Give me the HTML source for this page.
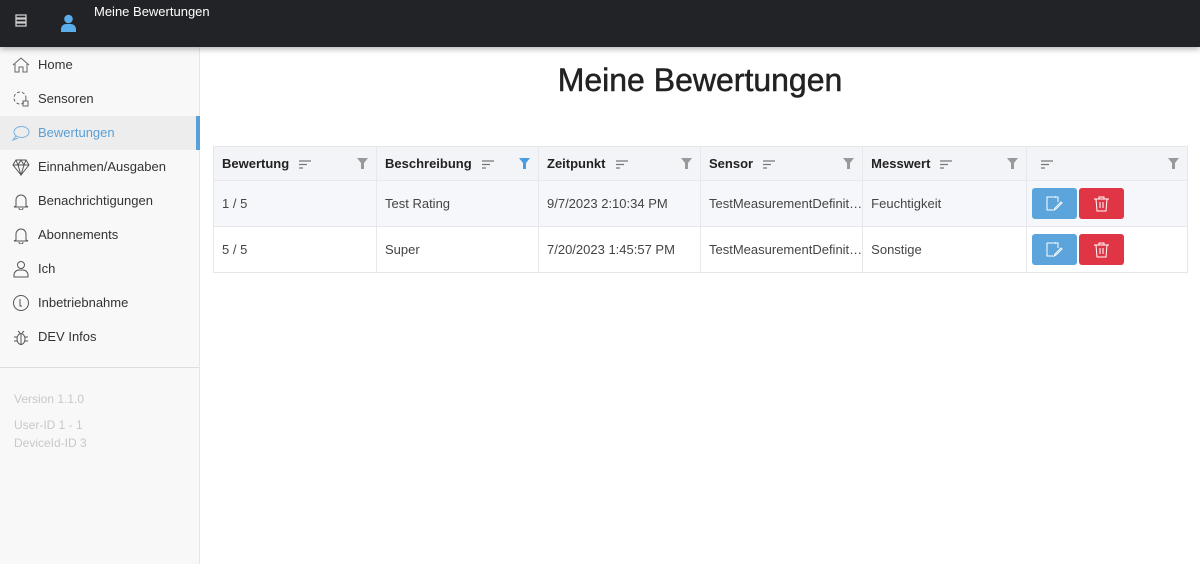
<!DOCTYPE html>
<html><head><meta charset="utf-8"><style>
*{box-sizing:border-box;margin:0;padding:0}
body{width:1200px;height:564px;overflow:hidden;font-family:"Liberation Sans",Arial,sans-serif;background:#fff;position:relative;font-size:13px;color:#333}
.top{position:absolute;left:0;top:0;width:1200px;height:47px;background:#222326;box-shadow:0 2px 6px rgba(0,0,0,.3);z-index:2}
.top .t{position:absolute;left:94px;top:4px;color:#fff;font-size:13px}
.side{position:absolute;left:0;top:47px;width:200px;height:517px;background:#f8f8f9;border-right:1px solid #e6e6e6}
.it{position:absolute;left:0;width:199px;height:34px;line-height:34px;padding-left:38px;color:#333;font-size:13px}
.it svg{position:absolute;left:12px;top:8px}
.act{background:#ededed;color:#5a9fd6;border-right:4px solid #5a9fd6;width:200px}
.ver{position:absolute;left:14px;color:#c8c8c8;font-size:12px}
h1{position:absolute;left:200px;width:1000px;top:62px;text-align:center;font-weight:normal;font-size:32px;color:#222;font-family:"Liberation Sans",sans-serif;-webkit-text-stroke:0.5px #222}
table{position:absolute;left:213px;top:146px;width:975px;border-collapse:collapse;border:1px solid #e4e6eb}
td,th{border-right:1px solid #e8e8ec;text-align:left;padding-left:8px;font-size:13px;color:#444}
th{height:34px;background:#f3f4f8;font-weight:bold;color:#222;position:relative}
tr.r td{height:46px;border-top:1px solid #e8e8ec}
tr.a td{background:#f6f7fa}
.s{display:inline-block;vertical-align:middle;margin-left:10px}
.f{position:absolute;right:8px;top:11px}
.b{display:inline-block;width:45px;height:31px;border-radius:3px;vertical-align:middle;margin-right:2px;position:relative}
.b svg{position:absolute;left:14px;top:7px}
</style></head><body>
<div class="top">
<svg style="position:absolute;left:15px;top:14px" width="12" height="13" viewBox="0 0 12 13"><g fill="none" stroke="#ccc" stroke-width="1.3"><rect x="1" y="1" width="10" height="3"/><rect x="1" y="5" width="10" height="3"/><rect x="1" y="9" width="10" height="3"/></g></svg>
<svg style="position:absolute;left:60px;top:14px" width="17" height="18" viewBox="0 0 17 18"><circle cx="8.5" cy="5" r="4.3" fill="#5aaeea"/><path d="M1 18v-3a5 5 0 0 1 5-5h5a5 5 0 0 1 5 5v3z" fill="#5aaeea"/></svg>
<div class="t">Meine Bewertungen</div>
</div>
<div class="side">
<div class="it" style="top:1px"><svg width="18" height="18" viewBox="0 0 18 18" fill="none" stroke="#666" stroke-width="1"><path d="M1 9L9 2l8 7M3 8v8h4v-5h4v5h4V8"/></svg>Home</div>
<div class="it" style="top:35px"><svg width="18" height="18" viewBox="0 0 18 18" fill="none" stroke="#666" stroke-width="1"><circle cx="8" cy="8" r="6" stroke-dasharray="3 2"/><rect x="11" y="11" width="5" height="5"/></svg>Sensoren</div>
<div class="it act" style="top:69px"><svg width="18" height="18" viewBox="0 0 18 18" fill="none" stroke="#7ab3e0" stroke-width="1"><ellipse cx="9.5" cy="8" rx="7.5" ry="5.5"/><path d="M4 12l-3 4 5-2"/></svg>Bewertungen</div>
<div class="it" style="top:103px"><svg width="18" height="18" viewBox="0 0 18 18" fill="none" stroke="#555" stroke-width="1"><path d="M4 2h10l3 5-8 10-8-10zM1 7h16M6 7l3 10 3-10M4 2l2 5 3-5 3 5 2-5"/></svg>Einnahmen/Ausgaben</div>
<div class="it" style="top:137px"><svg width="18" height="18" viewBox="0 0 18 18" fill="none" stroke="#555" stroke-width="1"><path d="M4 14V8a5 5 0 0 1 10 0v6l2 1H2zM7 16a2 2 0 0 0 4 0"/></svg>Benachrichtigungen</div>
<div class="it" style="top:171px"><svg width="18" height="18" viewBox="0 0 18 18" fill="none" stroke="#555" stroke-width="1"><path d="M4 14V8a5 5 0 0 1 10 0v6l2 1H2zM7 16a2 2 0 0 0 4 0"/></svg>Abonnements</div>
<div class="it" style="top:205px"><svg width="18" height="18" viewBox="0 0 18 18" fill="none" stroke="#555" stroke-width="1"><circle cx="9" cy="5" r="3.5"/><path d="M2 17v-2a5 5 0 0 1 5-5h4a5 5 0 0 1 5 5v2z"/></svg>Ich</div>
<div class="it" style="top:239px"><svg width="18" height="18" viewBox="0 0 18 18" fill="none" stroke="#555" stroke-width="1"><circle cx="9" cy="9" r="7.5"/><path d="M8 5v7h2"/></svg>Inbetriebnahme</div>
<div class="it" style="top:273px"><svg width="18" height="18" viewBox="0 0 18 18" fill="none" stroke="#555" stroke-width="1"><ellipse cx="9" cy="11" rx="4" ry="5.5"/><path d="M6 3l2 2M12 3l-2 2M2 9h3M13 9h3M2 13h3M13 13h3M9 6v10"/></svg>DEV Infos</div>
<div style="position:absolute;left:0;top:320px;width:199px;border-top:1px solid #ddd"></div>
<div class="ver" style="top:345px">Version 1.1.0</div>
<div class="ver" style="top:371px">User-ID 1 - 1</div>
<div class="ver" style="top:389px">DeviceId-ID 3</div>
</div>
<h1>Meine Bewertungen</h1>
<table>
<tr>
<th style="width:163px">Bewertung<svg class="s" width="12" height="9"><path d="M0 1h12M0 4.5h8M0 8h4" stroke="#777" stroke-width="1.2"/></svg><svg class="f" width="11" height="11"><path d="M0 0h11L7 5v6H4V5z" fill="#999"/></svg></th>
<th style="width:162px">Beschreibung<svg class="s" width="12" height="9"><path d="M0 1h12M0 4.5h8M0 8h4" stroke="#777" stroke-width="1.2"/></svg><svg class="f" width="11" height="11"><path d="M0 0h11L7 5v6H4V5z" fill="#4a9ee0"/></svg></th>
<th style="width:162px">Zeitpunkt<svg class="s" width="12" height="9"><path d="M0 1h12M0 4.5h8M0 8h4" stroke="#777" stroke-width="1.2"/></svg><svg class="f" width="11" height="11"><path d="M0 0h11L7 5v6H4V5z" fill="#999"/></svg></th>
<th style="width:162px">Sensor<svg class="s" width="12" height="9"><path d="M0 1h12M0 4.5h8M0 8h4" stroke="#777" stroke-width="1.2"/></svg><svg class="f" width="11" height="11"><path d="M0 0h11L7 5v6H4V5z" fill="#999"/></svg></th>
<th style="width:164px">Messwert<svg class="s" width="12" height="9"><path d="M0 1h12M0 4.5h8M0 8h4" stroke="#777" stroke-width="1.2"/></svg><svg class="f" width="11" height="11"><path d="M0 0h11L7 5v6H4V5z" fill="#999"/></svg></th>
<th style="border-right:0"><svg class="s" width="12" height="9" style="margin-left:6px"><path d="M0 1h12M0 4.5h8M0 8h4" stroke="#777" stroke-width="1.2"/></svg><svg class="f" width="11" height="11"><path d="M0 0h11L7 5v6H4V5z" fill="#999"/></svg></th>
</tr>
<tr class="r a"><td>1 / 5</td><td>Test Rating</td><td>9/7/2023 2:10:34 PM</td><td>TestMeasurementDefinit…</td><td>Feuchtigkeit</td><td style="border-right:0;padding-left:5px"><span class="b" style="background:#5ba4dc"><svg width="17" height="17" viewBox="0 0 17 17" fill="none" stroke="#fff" stroke-width="1"><path d="M9 2h3v5M4 2H1v13h6M5 1v2M7 1v2M9 1v2M8 15l2-1 6-6-1-1-6 6z"/></svg></span><span class="b" style="background:#e03545"><svg width="17" height="17" viewBox="0 0 17 17" fill="none" stroke="#fff" stroke-width="1"><path d="M1 4h15M6 4V2h5v2M3 4l1 12h9l1-12M7 7v6M10 7v6"/></svg></span></td></tr>
<tr class="r"><td>5 / 5</td><td>Super</td><td>7/20/2023 1:45:57 PM</td><td>TestMeasurementDefinit…</td><td>Sonstige</td><td style="border-right:0;padding-left:5px"><span class="b" style="background:#5ba4dc"><svg width="17" height="17" viewBox="0 0 17 17" fill="none" stroke="#fff" stroke-width="1"><path d="M9 2h3v5M4 2H1v13h6M5 1v2M7 1v2M9 1v2M8 15l2-1 6-6-1-1-6 6z"/></svg></span><span class="b" style="background:#e03545"><svg width="17" height="17" viewBox="0 0 17 17" fill="none" stroke="#fff" stroke-width="1"><path d="M1 4h15M6 4V2h5v2M3 4l1 12h9l1-12M7 7v6M10 7v6"/></svg></span></td></tr>
</table>
</body></html>
